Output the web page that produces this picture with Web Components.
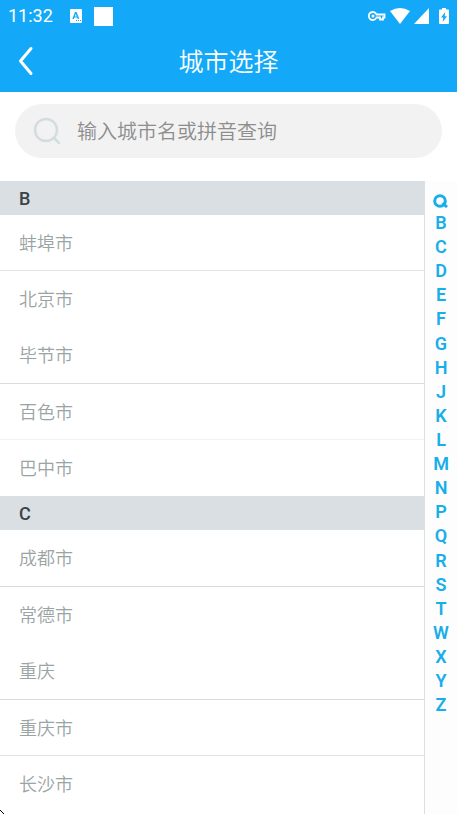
<!DOCTYPE html>
<html lang="zh-CN">
<head>
<meta charset="utf-8">
<meta name="viewport" content="width=device-width, initial-scale=1">
<title>城市选择</title>
<style>
html, body { height: 100%; }
body { margin: 0; font-family: Roboto, "Noto Sans CJK SC", sans-serif; background: #fff; }
</style>
</head>
<body>
<city-app></city-app>
<script>
const define = (name, html, setup) => {
  const template = document.createElement('template');
  template.innerHTML = html;
  customElements.define(name, class extends HTMLElement {
    constructor() {
      super();
      this.attachShadow({ mode: 'open' }).append(template.content.cloneNode(true));
    }
    connectedCallback() { if (setup) setup(this, this.shadowRoot); }
  });
};

define('status-bar', `
<style>
:host { display: flex; align-items: center; height: 32px; padding: 0 8px; color: #fff; font-size: 18px; font-weight: 400; }
time { line-height: 32px; margin-right: 17px; }
svg { display: block; fill: currentColor; }
.square { width: 19px; height: 19px; margin-left: 12px; background: #fff; }
.right { display: flex; align-items: center; gap: 4px; margin-left: auto; }
.battery { margin-left: 6px; }
</style>
<time>11:32</time>
<svg width="12" height="14" viewBox="0 0 12 14" aria-hidden="true"><path fill-rule="evenodd" d="M1 0h10q1 0 1 1v12q0 1-1 1H1q-1 0-1-1V1q0-1 1-1zM5 3 2.300 10h1.600l.5-1.400h2.800l.5 1.400h1.600L6.600 3zM5.800 4.800l.9 2.600H4.900zM6 11v1h1v-1zM8 11v1h1v-1zM10 11v1h1v-1z"/></svg>
<span class="square"></span>
<div class="right">
<svg width="18" height="10" viewBox="0 0 18 10" aria-hidden="true"><path fill="none" stroke="#fff" stroke-width="1.800" d="M8.500 3.500A4 4 0 1 0 8.500 6.500H12V8.500H15V6.500H16.500V3.500z"/><circle cx="5" cy="5" r="1.500"/></svg>
<svg width="20" height="16" viewBox="0 0 20 16" aria-hidden="true"><path d="M0 3Q10-3 20 3L10 16z"/></svg>
<svg width="15" height="16" viewBox="0 0 15 16" aria-hidden="true"><path d="M15 0v16H0z"/></svg>
<svg class="battery" width="10" height="16" viewBox="0 0 10 16" aria-hidden="true"><path fill-rule="evenodd" d="M3 0h4v1.500h2q1 0 1 1V15q0 1-1 1H1q-1 0-1-1V2.500q0-1 1-1h2zM6.200 4 2 9.500h2.300L3.600 14 8 8.200H5.700z"/></svg>
</div>`);

define('title-bar', `
<style>
:host { display: grid; grid-template-columns: 52px 1fr 52px; align-items: center; height: 60px; color: #fff; }
button { display: flex; align-items: center; justify-content: center; height: 58px; padding: 0; border: 0; background: none; color: inherit; }
:host { align-items: start; }
h1 { margin: 0; text-align: center; font-size: 25px; line-height: 62px; font-weight: 350; }
svg { fill: none; stroke: currentColor; stroke-width: 3; stroke-linecap: round; stroke-linejoin: round; }
</style>
<button type="button" aria-label="返回"><svg width="16" height="30" viewBox="0 0 16 30"><path d="M13 2.500 2.500 15 13 27.500"/></svg></button>
<h1><slot></slot></h1>`);

define('search-box', `
<style>
:host { display: block; padding: 12px 15px 23px; }
label { display: flex; align-items: center; gap: 15px; height: 54px; padding: 0 18px; border-radius: 27px; background: #f2f2f2; }
svg { flex: none; fill: none; stroke: #d3dddf; stroke-width: 2.500; stroke-linecap: round; }
input { flex: 1; box-sizing: border-box; min-width: 0; height: 54px; padding: 2px 0 0; border: 0; outline: 0; background: none; font: 350 20px/30px Roboto, "Noto Sans CJK SC", sans-serif; color: #444; }
input::placeholder { color: #8d8d8d; opacity: 1; }
</style>
<label><svg width="29" height="28" viewBox="0 0 29 28" aria-hidden="true"><circle cx="13" cy="13" r="11"/><path d="m21 21 5 5"/></svg>
<input type="text" placeholder="输入城市名或拼音查询" aria-label="输入城市名或拼音查询"></label>`);

define('city-section', `
<style>
:host { display: block; }
h2 { height: 34px; margin: 0; padding: 0 19px; font-size: 18px; line-height: 36px; font-weight: 500; color: #3a4245; background: #d9dfe2; }
</style>
<h2></h2><div role="list"><slot></slot></div>`, (el, root) => {
  root.querySelector('h2').textContent = el.getAttribute('letter');
});

define('city-row', `
<style>
:host { display: block; }
button { display: block; box-sizing: border-box; width: 100%; height: 56px; padding: 2px 19px 0; border: 0; background: none; text-align: left; font: 350 18px/54px Roboto, "Noto Sans CJK SC", sans-serif; color: #9aa4a4; }
:host([line=faint]) { box-shadow: inset 0 -1px #f1f3f3; }
:host([line=light]) { box-shadow: inset 0 -1px #dfe5e7; }
:host([line=strong]) { border-bottom: 1px solid #d6dcdf; }
</style>
<button type="button"><slot></slot></button>`, el => el.setAttribute('role', 'listitem'));

define('letter-index', `
<style>
:host { display: block; border-left: 1px solid #d9dfe2; background: #fdfdfd; }
nav { display: flex; flex-direction: column; height: 100%; }
.letters { display: flex; flex-direction: column; height: 80%; }
a { display: flex; flex: 1; align-items: center; justify-content: center; color: #18aeea; font-size: 18px; line-height: 24px; font-weight: 600; text-decoration: none; }
.search { flex: none; height: 20px; padding: 10px 2px 0 0; }
svg { fill: none; stroke: currentColor; stroke-width: 3; }
</style>
<nav aria-label="字母索引"><a class="search" href="#search" aria-label="搜索"><svg width="15" height="14" viewBox="0 0 15 14"><circle cx="7" cy="7" r="5.300"/><path d="m9.500 9 4.500 4"/></svg></a><div class="letters"></div></nav>`, (el, root) => {
  const box = root.querySelector('.letters');
  for (const letter of 'BCDEFGHJKLMNPQRSTWXYZ') {
    const a = document.createElement('a');
    a.href = '#' + letter;
    a.textContent = letter;
    box.append(a);
  }
});

define('city-app', `
<style>
:host { display: flex; flex-direction: column; position: relative; height: 100vh; overflow: hidden; }
header { flex: none; background: #14a9f8; }
search-box { flex: none; }
main { display: grid; grid-template-columns: 1fr 33px; grid-template-rows: minmax(0, 1fr); flex: 1; min-height: 0; }
.list { overflow: auto; scrollbar-width: none; }
.corner { position: absolute; left: 0; bottom: 0; }
</style>
<header><status-bar></status-bar><title-bar>城市选择</title-bar></header>
<search-box></search-box>
<main>
<div class="list">
<city-section letter="B">
<city-row line="light">蚌埠市</city-row><city-row>北京市</city-row><city-row line="strong">毕节市</city-row><city-row line="faint">百色市</city-row><city-row>巴中市</city-row>
</city-section>
<city-section letter="C">
<city-row line="strong">成都市</city-row><city-row>常德市</city-row><city-row line="strong">重庆</city-row><city-row line="light">重庆市</city-row><city-row>长沙市</city-row>
</city-section>
</div>
<letter-index></letter-index>
</main>
<svg class="corner" width="4" height="4" viewBox="0 0 4 4" aria-hidden="true"><path d="M0 0h1v1h1v1h1v1h1v1H3V3H2V2H1V1H0z"/></svg>`);
</script>
</body>
</html>
